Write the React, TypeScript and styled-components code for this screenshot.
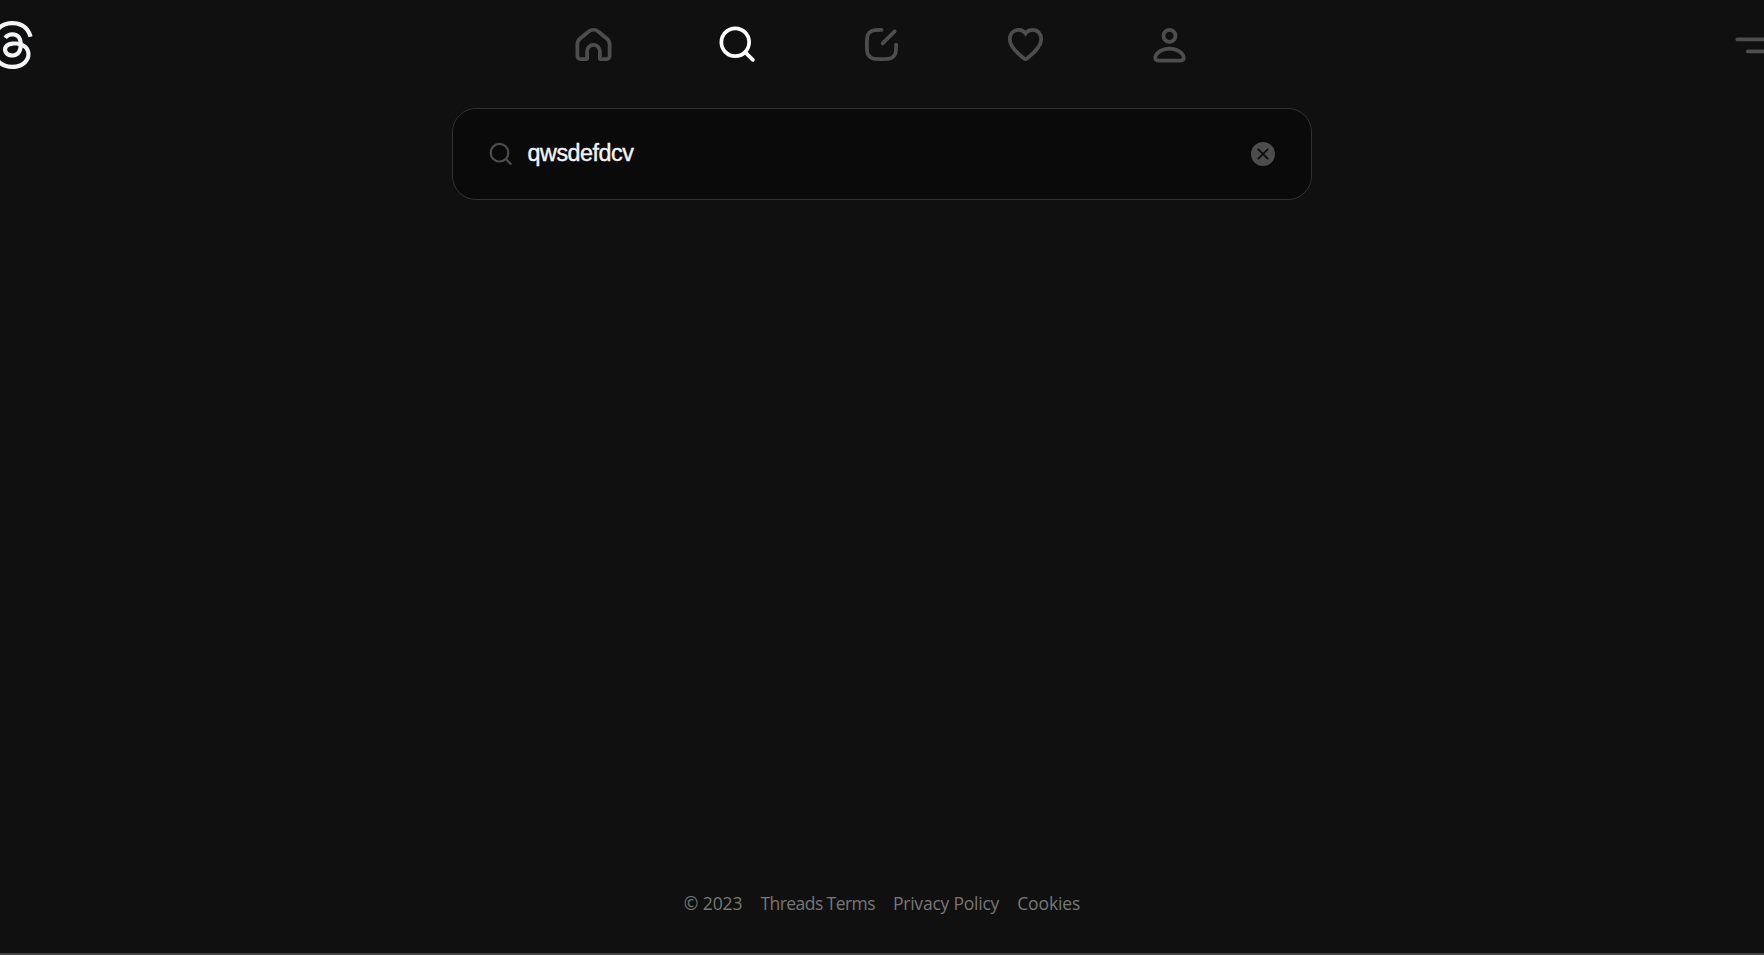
import React from "react";
import styled, { createGlobalStyle } from "styled-components";

const GlobalStyle = createGlobalStyle`
  * { box-sizing: border-box; }
  body { margin: 0; background: #101010; overflow: hidden; }
`;

const Page = styled.div`
  display: flex;
  flex-direction: column;
  height: 100vh;
  overflow: hidden;
  background: #101010;
  border-bottom: 2px solid #444;
`;

const Header = styled.header`
  display: flex;
  align-items: center;
  justify-content: space-between;
  flex: none;
  height: 90px;
  margin: 0 -3px 0 -12px;
`;

const Logo = styled.svg`
  display: block;
  width: 48px;
  height: 48px;
  fill: #f3f5f7;
`;

const Nav = styled.nav`
  display: flex;
  gap: 105px;
  margin-left: -4px;
  padding-bottom: 2px;
`;

const NavIcon = styled.svg<{ $active?: boolean }>`
  display: block;
  width: 39px;
  height: 39px;
  color: ${(p) => (p.$active ? "#fff" : "#4d4d4d")};
  fill: none;
  stroke: currentColor;
  stroke-width: 2.5;
  stroke-linecap: round;
`;

const MenuIcon = styled.svg`
  display: block;
  width: 36px;
  height: 36px;
  fill: #4d4d4d;
`;

const Main = styled.main`
  display: flex;
  flex: 1;
  justify-content: center;
  align-items: flex-start;
  padding-top: 18px;
`;

const SearchBox = styled.div`
  display: flex;
  align-items: center;
  width: 860px;
  height: 92px;
  padding: 0 36px;
  border: 1px solid #323232;
  border-radius: 24px;
  background: #0a0a0a;
`;

const SearchIcon = styled.svg`
  width: 24px;
  height: 24px;
  fill: none;
  stroke: #4d4d4d;
  stroke-width: 2.2;
`;

const Query = styled.span`
  flex: 1;
  margin-left: 14.5px;
  padding-bottom: 2px;
  font: 23.3px/30px "Liberation Sans", Arial, sans-serif;
  letter-spacing: -0.45px;
  -webkit-text-stroke: 0.4px #f3f5f7;
  color: #f3f5f7;
`;

const Clear = styled.svg`
  width: 24px;
  height: 24px;
`;

const Footer = styled.footer`
  display: flex;
  justify-content: center;
  gap: 18px;
  flex: none;
  height: 62px;
  font: 17.5px/24px "Open Sans", "Noto Sans", sans-serif;
  color: #777;
`;

const FooterItem = styled.span<{ $tracking: number }>`
  white-space: nowrap;
  letter-spacing: ${(p) => p.$tracking}px;
`;

export default function App() {
  return (
    <>
      <GlobalStyle />
      <Page>
        <Header>
          <Logo viewBox="0 0 192 192">
            <path d="M141.537 88.9883C140.71 88.5919 139.87 88.2104 139.019 87.8451C137.537 60.5382 122.616 44.905 97.5619 44.745C97.4484 44.7443 97.3355 44.7443 97.222 44.7443C82.2364 44.7443 69.7731 51.1409 62.102 62.7807L75.881 72.2328C81.6116 63.5383 90.6052 61.6848 97.2286 61.6848C97.3051 61.6848 97.3819 61.6848 97.4576 61.6855C105.707 61.7381 111.932 64.1366 115.961 68.814C118.893 72.2193 120.854 76.925 121.825 82.8638C114.511 81.6207 106.601 81.2385 98.145 81.7233C74.3247 83.0954 59.0111 96.9879 60.0396 116.292C60.5615 126.084 65.4397 134.508 73.775 140.011C80.8224 144.663 89.899 146.938 99.3323 146.423C111.79 145.74 121.563 140.987 128.381 132.296C133.559 125.696 136.834 117.143 138.28 106.366C144.217 109.949 148.617 114.664 151.047 120.332C155.179 129.967 155.42 145.8 142.501 158.708C131.182 170.016 117.576 174.908 97.0135 175.059C74.2042 174.89 56.9538 167.575 45.7381 153.317C35.2355 139.966 29.8077 120.682 29.6052 96C29.8077 71.3178 35.2355 52.0336 45.7381 38.6827C56.9538 24.4249 74.2039 17.11 97.0132 16.9405C119.988 17.1113 137.539 24.4614 149.184 38.788C154.894 45.8136 159.199 54.6488 162.037 64.9503L178.184 60.6422C174.744 47.9622 169.331 37.0357 161.965 27.974C147.036 9.60668 125.202 0.195148 97.0695 0H96.9569C68.8816 0.19447 47.2921 9.6418 32.7883 28.0793C19.8819 44.4864 13.2244 67.3157 13.0007 95.9325L13 96L13.0007 96.0675C13.2244 124.684 19.8819 147.514 32.7883 163.921C47.2921 182.358 68.8816 191.806 96.9569 192H97.0695C122.03 191.827 139.624 185.292 154.118 170.811C173.081 151.866 172.51 128.119 166.26 113.541C161.776 103.087 153.227 94.5962 141.537 88.9883ZM98.4405 129.507C88.0005 130.095 77.1544 125.409 76.6196 115.372C76.2232 107.93 81.9158 99.626 99.0812 98.6368C101.047 98.5234 102.976 98.468 104.871 98.468C111.106 98.468 116.939 99.0737 122.242 100.233C120.264 124.935 108.662 128.946 98.4405 129.507Z" />
          </Logo>
          <Nav>
            <NavIcon viewBox="0 0 26 26">
              <path d="M2.25 12.8855V20.7497C2.25 21.8543 3.14543 22.7497 4.25 22.7497H8.25C8.52614 22.7497 8.75 22.5258 8.75 22.2497V17.4997C8.75 15.1525 10.6528 13.2497 13 13.2497C15.3472 13.2497 17.25 15.1525 17.25 17.4997V22.2497C17.25 22.5258 17.4739 22.7497 17.75 22.7497H21.75C22.8546 22.7497 23.75 21.8543 23.75 20.7497V12.8855C23.75 11.3765 23.0685 9.94814 21.8954 8.99882L16.1454 4.34539C14.3112 2.86094 11.6888 2.86094 9.85455 4.34539L4.10455 8.99882C2.93153 9.94814 2.25 11.3765 2.25 12.8855Z" />
            </NavIcon>
            <NavIcon viewBox="0 0 26 26" $active>
              <circle cx="11.5" cy="11.5" r="9.25" />
              <path d="M18.2 18.2L23.25 23.25" />
            </NavIcon>
            <NavIcon viewBox="0 0 26 26">
              <path d="M22.75 13V13.15C22.75 16.5103 22.75 18.1905 22.0961 19.4739C21.5208 20.6029 20.6029 21.5208 19.4739 22.096C18.1905 22.75 16.5103 22.75 13.15 22.75H12.85C9.48969 22.75 7.80953 22.75 6.52606 22.096C5.39708 21.5208 4.4792 20.6029 3.90396 19.4739C3.25 18.1905 3.25 16.5103 3.25 13.15V12.85C3.25 9.48968 3.25 7.80953 3.90396 6.52606C4.4792 5.39708 5.39708 4.47919 6.52606 3.90396C7.80953 3.25 9.48969 3.25 12.85 3.25H13M21.75 4.25L13.75 12.25" />
            </NavIcon>
            <NavIcon viewBox="0 0 26 26">
              <path d="M13 5.7C11.9 4.1 10.2 3.25 8.3 3.25C4.9 3.25 2.5 5.9 2.5 9.4C2.5 13.7 5.9 17.7 12.2 22.45C12.7 22.8 13.3 22.8 13.8 22.45C20.1 17.7 23.5 13.7 23.5 9.4C23.5 5.9 21.1 3.25 17.7 3.25C15.8 3.25 14.1 4.1 13 5.7Z" />
            </NavIcon>
            <NavIcon viewBox="0 0 26 26">
              <circle cx="13" cy="7.25" r="4" />
              <path d="M6.26678 23.75H19.744C21.603 23.75 22.5 23.2186 22.5 22.0673C22.5 19.3712 18.8038 15.75 13 15.75C7.19625 15.75 3.5 19.3712 3.5 22.0673C3.5 23.2186 4.39704 23.75 6.26678 23.75Z" />
            </NavIcon>
          </Nav>
          <MenuIcon viewBox="0 0 24 24">
            <rect x="3" y="7" width="21" height="2.5" rx="1.25" />
            <rect x="10" y="15" width="14" height="2.5" rx="1.25" />
          </MenuIcon>
        </Header>
        <Main>
          <SearchBox>
            <SearchIcon viewBox="0 0 24 24">
              <circle cx="10.5" cy="10.7" r="8.8" />
              <path d="M16.8 17L22.3 22.5" />
            </SearchIcon>
            <Query>qwsdefdcv</Query>
            <Clear viewBox="0 0 24 24">
              <circle cx="12" cy="12" r="12" fill="#4d4d4d" />
              <path d="M6.8 6.8L17.2 17.2M17.2 6.8L6.8 17.2" stroke="#0a0a0a" strokeWidth="1.7" />
            </Clear>
          </SearchBox>
        </Main>
        <Footer>
          <FooterItem $tracking={-0.05}>© 2023</FooterItem>
          <FooterItem $tracking={-0.57}>Threads Terms</FooterItem>
          <FooterItem $tracking={-0.22}>Privacy Policy</FooterItem>
          <FooterItem $tracking={-0.1}>Cookies</FooterItem>
        </Footer>
      </Page>
    </>
  );
}
